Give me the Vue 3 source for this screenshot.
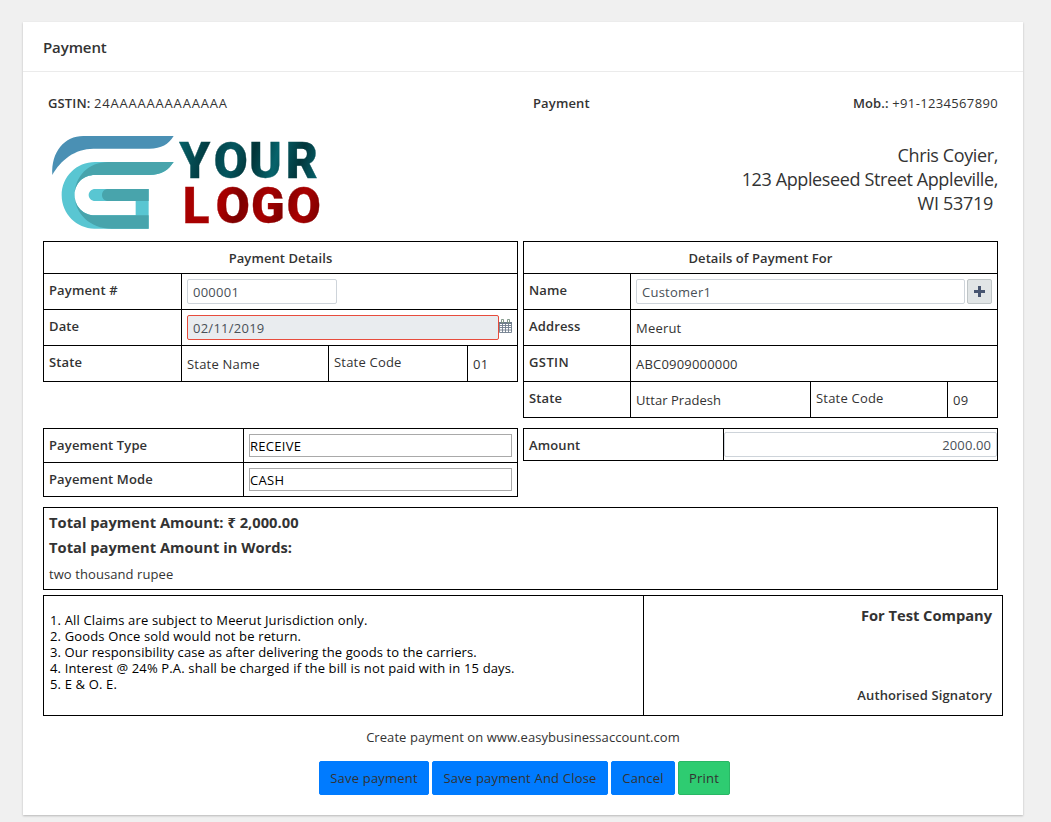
<script setup>
import { ref } from 'vue'

const invoiceNo = ref('000001')
const date = ref('02/11/2019')
const customer = ref('Customer1')
const amount = ref('2000.00')
const terms = [
  'All Claims are subject to Meerut Jurisdiction only.',
  'Goods Once sold would not be return.',
  'Our responsibility case as after delivering the goods to the carriers.',
  'Interest @ 24% P.A. shall be charged if the bill is not paid with in 15 days.',
  'E & O. E.',
]
</script>

<template>
  <main class="card">
    <header class="card-head">Payment</header>
    <div class="body">
      <div class="top">
        <div><b>GSTIN:</b> <span class="gst">24AAAAAAAAAAAAA</span></div>
        <b class="title">Payment</b>
        <div class="right"><b>Mob.:</b> <span class="mob">+91-1234567890</span></div>
      </div>

      <div class="brand">
        <svg class="logo" viewBox="9 0 870 345" width="290" height="115">
          <defs>
            <linearGradient id="teal" gradientUnits="userSpaceOnUse" x1="417" y1="50" x2="834" y2="160">
              <stop offset="0" stop-color="#07636a" />
              <stop offset=".2" stop-color="#023c42" />
              <stop offset=".38" stop-color="#04565e" />
              <stop offset=".52" stop-color="#023438" />
              <stop offset=".68" stop-color="#06636b" />
              <stop offset=".85" stop-color="#02363b" />
              <stop offset="1" stop-color="#06646d" />
            </linearGradient>
            <linearGradient id="red" gradientUnits="userSpaceOnUse" x1="433" y1="185" x2="834" y2="295">
              <stop offset="0" stop-color="#a90000" />
              <stop offset=".3" stop-color="#a60000" />
              <stop offset=".42" stop-color="#7c0000" />
              <stop offset=".6" stop-color="#a80000" />
              <stop offset=".72" stop-color="#830000" />
              <stop offset=".85" stop-color="#aa0000" />
              <stop offset="1" stop-color="#7d0000" />
            </linearGradient>
          </defs>
          <path fill="#4a90b4" d="M37 150C33 80 74 33 130 33H401C385 58 365 71 328 71H160C105 71 62 105 37 150z" />
          <path fill="#59c6d2" d="M165 111C110 111 65 155 65 211S110 311 163 311H326V192H166C154 192 146 200 146 210S154 228 166 228H287V271H165C130 271 104 245 104 210S130 150 165 150H328C365 150 385 135 401 111z" />
          <path fill="#48a4ac" d="M205 111H401C385 135 365 150 328 150H165C130 150 104 175 104 210C104 155 145 111 205 111z" />
          <path fill="#48a4ac" d="M104 210C104 245 130 271 165 271H326V311H215C150 311 104 265 104 210z" />
          <path fill="#48a4ac" d="M206 192H326V228H206C192 228 186 220 186 210S192 192 206 192z" />
          <text class="mark" x="418 521 627 737" y="158" fill="url(#teal)" stroke="url(#teal)">YOUR</text>
          <text class="mark" x="428 527 633 740" y="293" fill="url(#red)" stroke="url(#red)">LOGO</text>
        </svg>
        <address>
          Chris Coyier,<br />123 Appleseed Street Appleville,<br /><span class="zip">WI 53719</span>
        </address>
      </div>

      <div class="pair">
        <section class="table">
          <h3>Payment Details</h3>
          <div class="row left">
            <b class="label">Payment #</b>
            <div class="cell"><input v-model="invoiceNo" class="field short" /></div>
          </div>
          <div class="row left">
            <b class="label">Date</b>
            <div class="cell">
              <input v-model="date" class="field date" readonly />
              <svg class="cal" width="13" height="14" viewBox="0 0 13 14" fill="none" stroke="#6f7d8c">
                <path d="M.5 3.5h12v10H.5zM.5 6.5h12M.5 8.5h12M.5 11h12M3.5 5v8.500M6.500 5v8.500M9.500 5v8.500" stroke-width=".9" />
                <path d="M0 3h13v2H0z" fill="#6f7d8c" stroke="none" />
                <path d="M2.500.5h2v3h-2zM8.500.5h2v3h-2z" fill="#fff" stroke="#66806f" stroke-width=".8" />
              </svg>
            </div>
          </div>
          <div class="row state-left">
            <b class="label">State</b>
            <div class="cell text">State Name</div>
            <div class="label">State Code</div>
            <div class="cell text">01</div>
          </div>
        </section>

        <section class="table">
          <h3>Details of Payment For</h3>
          <div class="row party">
            <b class="label">Name</b>
            <div class="cell">
              <input v-model="customer" class="field grow" />
              <button class="add" aria-label="Add">
                <svg width="11" height="11" viewBox="0 0 11 11"><path d="M4 0h3v4h4v3H7v4H4V7H0V4h4z" fill="#475570" /></svg>
              </button>
            </div>
          </div>
          <div class="row party">
            <b class="label">Address</b>
            <div class="cell text">Meerut</div>
          </div>
          <div class="row party">
            <b class="label wide">GSTIN</b>
            <div class="cell text">ABC0909000000</div>
          </div>
          <div class="row state-right">
            <b class="label">State</b>
            <div class="cell text tight">Uttar Pradesh</div>
            <div class="label">State Code</div>
            <div class="cell text">09</div>
          </div>
        </section>
      </div>

      <div class="pair second">
        <section class="table">
          <div class="row pay">
            <b class="label">Payement Type</b>
            <div class="cell"><div class="select">RECEIVE</div></div>
          </div>
          <div class="row pay">
            <b class="label">Payement Mode</b>
            <div class="cell"><div class="select">CASH</div></div>
          </div>
        </section>
        <section class="table">
          <div class="row amount">
            <b class="label">Amount</b>
            <div class="cell"><input v-model="amount" class="field grow num" /></div>
          </div>
        </section>
      </div>

      <section class="total">
        <strong>Total payment Amount: ₹ 2,000.00</strong>
        <strong>Total payment Amount in Words:</strong>
        <p>two thousand rupee</p>
      </section>

      <section class="terms">
        <div class="list">
          <div v-for="(t, i) in terms" :key="i">{{ i + 1 }}. {{ t }}</div>
        </div>
        <div class="sign">
          <strong>For Test Company</strong>
          <b>Authorised Signatory</b>
        </div>
      </section>

      <p class="note">Create payment on www.easybusinessaccount.com</p>
      <div class="actions">
        <button class="btn b1">Save payment</button>
        <button class="btn b2">Save payment And Close</button>
        <button class="btn b3">Cancel</button>
        <button class="btn b4 green">Print</button>
      </div>
    </div>
  </main>
</template>

<style>
body { background: #f0f0f0; overflow: hidden; }
</style>

<style scoped>
* { box-sizing: border-box; }
.card {
  width: 1000px;
  height: 793px;
  margin: 22px 0 7px 23px;
  background: #fff;
  box-shadow: 0 1px 2px rgba(0, 0, 0, .24);
  font: 13px/18px "Open Sans", "Noto Sans", sans-serif;
  letter-spacing: .2px;
  color: #333;
}
b { font-weight: 600; letter-spacing: .13px; }
.card-head {
  height: 50px;
  padding-left: 20px;
  border-bottom: 1px solid #ebebeb;
  font-size: 15px;
  line-height: 51px;
  font-weight: 600;
  letter-spacing: -.1px;
}
.body { padding: 0 20px; }
.top {
  display: grid;
  grid-template-columns: 485px auto 1fr;
  padding: 22px 5px 0;
  height: 53px;
}
.gst { letter-spacing: .8px; }
.mob { letter-spacing: .35px; }
.right { text-align: right; }
.brand { display: flex; justify-content: space-between; height: 116px; }
.logo { display: block; }
.mark { font: 900 148px "Roboto", sans-serif; letter-spacing: 0; stroke-width: 1; }
address {
  margin: 18px 5px 0 0;
  font: 18px/24px "Open Sans", sans-serif;
  letter-spacing: -.38px;
  text-align: right;
}
.zip { margin-right: 5px; letter-spacing: -.3px; }
.pair { display: grid; grid-template-columns: 475px 475px; gap: 5px; align-items: start; }
.table { border: 1px solid #000; }
h3 {
  margin: 0;
  height: 31px;
  text-align: center;
  font-size: 13px;
  line-height: 33px;
  font-weight: 600;
  letter-spacing: .08px;
}
.row { display: grid; height: 36px; border-top: 1px solid #000; }
.row > * + * { border-left: 1px solid #000; }
.left { grid-template-columns: 137px 1fr; }
.state-left { grid-template-columns: 137px 147px 139px 1fr; }
.party { grid-template-columns: 106px 1fr; }
.state-right { grid-template-columns: 106px 180px 137px 1fr; }
.label { padding: 7px 0 0 5px; }
.wide { letter-spacing: .4px; }
.cell { display: flex; align-items: flex-start; padding: 5px 5px 0; }
.cell.text { padding-top: 9px; }
.tight { letter-spacing: .05px; }
.field {
  height: 25px;
  min-width: 0;
  padding: 0 5px;
  border: 1px solid #ced4da;
  border-radius: 2px;
  background: #fff;
  font: inherit;
  letter-spacing: .25px;
  color: #495057;
  outline: 0;
}
.short { width: 150px; }
.date { width: 312px; background: #e9ecef; border-color: #e74c3c; }
.cal { flex: none; margin-top: 4px; }
.grow { flex: 1; }
.num { text-align: right; }
.add {
  display: grid;
  place-items: center;
  width: 25px;
  height: 25px;
  margin-left: 2px;
  padding: 0;
  border: 1px solid #bfc5c7;
  border-radius: 2px;
  background: #e1e5e6;
}
.second { margin-top: 10px; }
.pay { grid-template-columns: 199px 1fr; height: 34px; }
.pay:first-child, .amount { border-top: 0; }
.pay:first-child { height: 33px; }
.select {
  flex: 1;
  height: 23px;
  border: 1px solid #a9a9a9;
  color: #000;
  line-height: 23px;
  letter-spacing: .3px;
}
.amount { grid-template-columns: 199px 1fr; height: 31px; }
.amount .cell { padding: 3px 0 0; }
.amount .field { padding-top: 1px; letter-spacing: .1px; }
.total {
  height: 83px;
  margin-top: 10px;
  padding: 2px 5px 0;
  width: 955px;
  border: 1px solid #000;
}
.total strong { display: block; font-size: 14.7px; line-height: 25px; letter-spacing: .02px; }
.total p { margin: 5px 0 0; letter-spacing: .08px; }
.terms {
  display: grid;
  grid-template-columns: 599px 1fr;
  width: 960px;
  height: 121px;
  margin-top: 5px;
  border: 1px solid #000;
}
.list { padding: 16px 6px; line-height: 16px; color: #000; letter-spacing: .15px; }
.list > div:nth-child(3) { letter-spacing: .1px; }
.sign {
  display: flex;
  flex-direction: column;
  justify-content: space-between;
  align-items: flex-end;
  padding: 7px 10px 11px 0;
  border-left: 1px solid #000;
}
.sign strong { font-size: 14.7px; line-height: 25px; letter-spacing: -.02px; }
.note { margin: 12px 0 0; text-align: center; letter-spacing: .06px; }
.actions { display: flex; gap: 3px; margin-top: 15px; padding-left: 276px; }
.btn {
  height: 34px;
  padding: 0;
  border: 1px solid #007bff;
  border-radius: 2px;
  background: #007bff;
  color: #333;
  font: inherit;
  letter-spacing: .2px;
}
.b1 { width: 110px; }
.b2 { width: 176px; }
.b3 { width: 64px; }
.b4 { width: 52px; }
.green { background: #2ecc71; border-color: #29b765; }
</style>
